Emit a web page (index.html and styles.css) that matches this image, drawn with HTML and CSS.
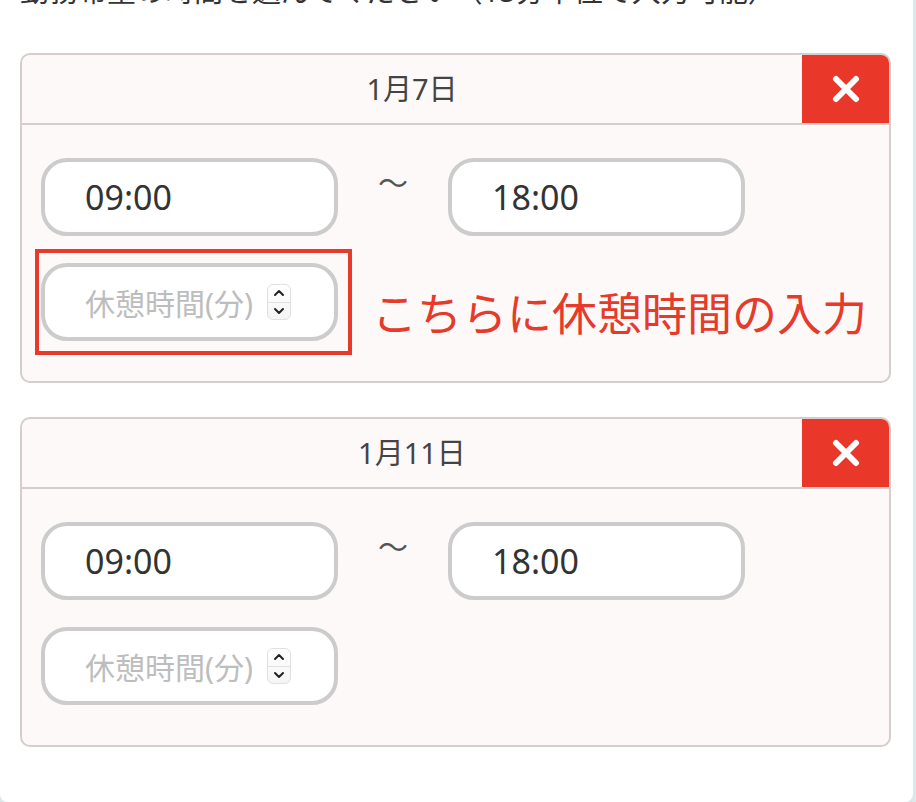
FILE: index.html
```html
<!DOCTYPE html>
<html lang="ja">
<head>
  <meta charset="UTF-8" />
  <meta name="viewport" content="width=device-width, initial-scale=1.0" />
  <title>勤務希望</title>
  <link rel="stylesheet" href="styles.css">
</head>
<body>
  <div class="sheet">
    <p class="lead">勤務希望の時間を選んでください（15分単位で入力可能）</p>

    <section class="day">
      <div class="day-head">
        <span class="day-date">1月7日</span>
        <button class="day-remove" type="button" aria-label="削除">
          <svg width="28" height="28" viewBox="0 0 28 28"><path d="M4 4 L24 24 M24 4 L4 24" stroke="#fff" stroke-width="6" stroke-linecap="round"/></svg>
        </button>
      </div>
      <div class="day-body">
        <div class="time-row">
          <div class="field">09:00</div>
          <span class="tilde">～</span>
          <div class="field">18:00</div>
        </div>
        <div class="break-row">
          <div class="marked">
            <div class="field break">
              <span class="placeholder">休憩時間(分)</span>
              <span class="spin">
                <span class="spin-half"><svg width="12" height="8" viewBox="0 0 12 8"><path d="M2 6 L6 2 L10 6" fill="none" stroke="#222" stroke-width="2" stroke-linecap="round" stroke-linejoin="round"/></svg></span>
                <span class="spin-half down"><svg width="12" height="8" viewBox="0 0 12 8"><path d="M2 2 L6 6 L10 2" fill="none" stroke="#222" stroke-width="2" stroke-linecap="round" stroke-linejoin="round"/></svg></span>
              </span>
            </div>
          </div>
          <span class="note">こちらに休憩時間の入力</span>
        </div>
      </div>
    </section>

    <section class="day">
      <div class="day-head">
        <span class="day-date">1月11日</span>
        <button class="day-remove" type="button" aria-label="削除">
          <svg width="28" height="28" viewBox="0 0 28 28"><path d="M4 4 L24 24 M24 4 L4 24" stroke="#fff" stroke-width="6" stroke-linecap="round"/></svg>
        </button>
      </div>
      <div class="day-body">
        <div class="time-row">
          <div class="field">09:00</div>
          <span class="tilde">～</span>
          <div class="field">18:00</div>
        </div>
        <div class="break-row">
          <div class="field break">
            <span class="placeholder">休憩時間(分)</span>
            <span class="spin">
              <span class="spin-half"><svg width="12" height="8" viewBox="0 0 12 8"><path d="M2 6 L6 2 L10 6" fill="none" stroke="#222" stroke-width="2" stroke-linecap="round" stroke-linejoin="round"/></svg></span>
              <span class="spin-half down"><svg width="12" height="8" viewBox="0 0 12 8"><path d="M2 2 L6 6 L10 2" fill="none" stroke="#222" stroke-width="2" stroke-linecap="round" stroke-linejoin="round"/></svg></span>
            </span>
          </div>
        </div>
      </div>
    </section>
  </div>
</body>
</html>
```

FILE: styles.css
```css
body {
  margin: 0;
  font-family: 'Noto Sans', 'Noto Sans CJK JP', sans-serif;
  background: #dde8e8;
  color: #333;
  overflow: hidden;
}
.sheet {
  width: 913px;
  height: 802px;
  background: #ffffff;
  border-radius: 0 0 8px 8px;
  overflow: hidden;
}
.lead {
  margin: -29px 0 42px 20px;
  font-size: 29px;
  line-height: 40px;
  white-space: nowrap;
  color: #333;
}
.day {
  margin: 0 22px 34px 20px;
  border: 2px solid #d6cdcd;
  border-radius: 10px;
  background: #fdf9f8;
  overflow: hidden;
}
.day-head {
  display: flex;
  height: 68px;
  border-bottom: 2px solid #d6cdcd;
}
.day-date {
  flex: 1;
  display: flex;
  align-items: center;
  justify-content: center;
  padding-bottom: 4px;
  font-size: 29px;
  color: #444;
}
.day-remove {
  width: 87px;
  border: none;
  padding: 0;
  background: #e93829;
  display: flex;
  align-items: center;
  justify-content: center;
  cursor: pointer;
}
.day-body {
  padding: 33px 19px 40px;
}
.time-row {
  display: flex;
  align-items: flex-start;
}
.field {
  box-sizing: border-box;
  width: 297px;
  height: 78px;
  border: 4px solid #cccccc;
  border-radius: 26px;
  background: #ffffff;
  padding-left: 40px;
  display: flex;
  align-items: center;
  font-size: 34px;
  color: #333;
}
.tilde {
  width: 110px;
  text-align: center;
  font-size: 30px;
  line-height: 50px;
  color: #555;
}
.break-row {
  display: flex;
  align-items: center;
  margin-top: 27px;
}
.marked {
  position: relative;
}
.marked::before {
  content: "";
  position: absolute;
  top: -14px;
  bottom: -14px;
  left: -6px;
  right: -14px;
  border: 4px solid #e63a2b;
}
.placeholder {
  font-size: 30px;
  color: #bdbdbd;
}
.spin {
  margin-left: 14px;
  width: 24px;
  height: 36px;
  box-sizing: border-box;
  border: 1px solid #e0e0e0;
  border-radius: 6px;
  display: flex;
  flex-direction: column;
  background: linear-gradient(#fff, #f5f5f5);
}
.spin-half {
  flex: 1;
  display: flex;
  align-items: center;
  justify-content: center;
}
.spin-half.down {
  border-top: 1px solid #e0e0e0;
}
.note {
  margin: 22px 0 0 34px;
  font-size: 45px;
  line-height: 45px;
  color: #e63a2b;
  white-space: nowrap;
}
```
